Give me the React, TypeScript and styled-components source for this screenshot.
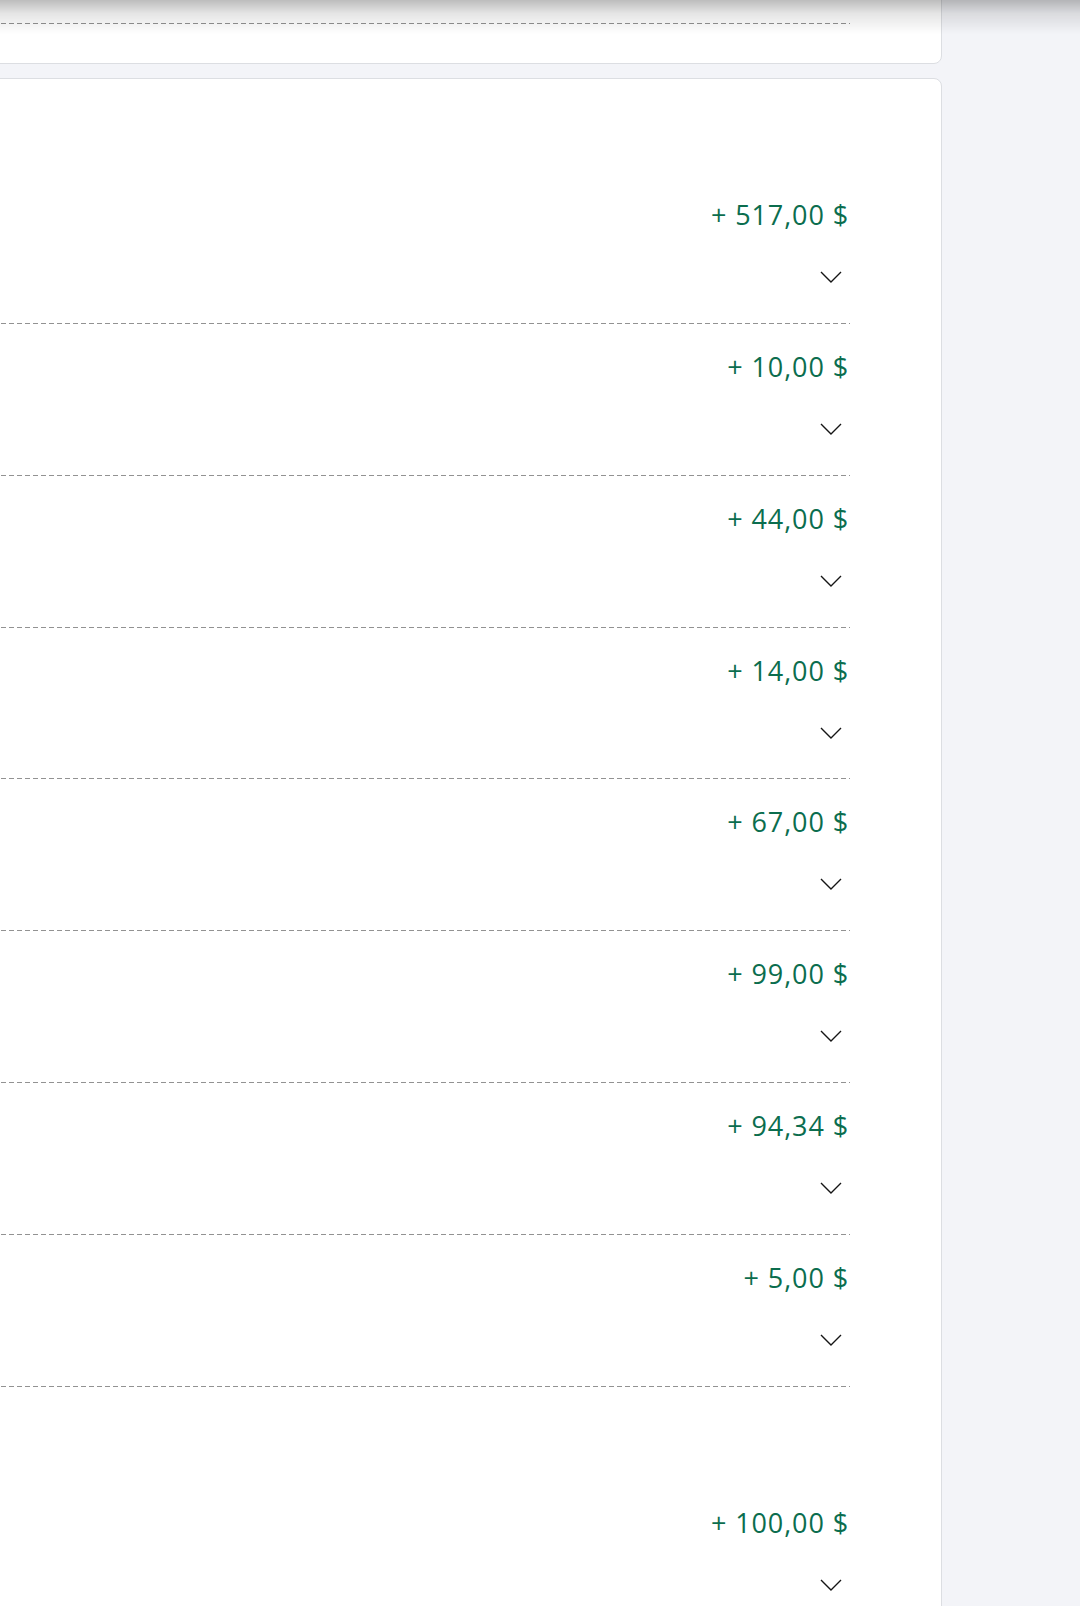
import styled, { createGlobalStyle } from 'styled-components';

type Entry = {
    id: string;
    amount: string;
};

type Group = {
    id: string;
    entries: Entry[];
};

const groups: Group[] = [
    {
        id: 'g1',
        entries: [
            { id: 'e1', amount: '+ 517,00 $' },
            { id: 'e2', amount: '+ 10,00 $' },
            { id: 'e3', amount: '+ 44,00 $' },
            { id: 'e4', amount: '+ 14,00 $' },
            { id: 'e5', amount: '+ 67,00 $' },
            { id: 'e6', amount: '+ 99,00 $' },
            { id: 'e7', amount: '+ 94,34 $' },
            { id: 'e8', amount: '+ 5,00 $' },
        ],
    },
    {
        id: 'g2',
        entries: [{ id: 'e9', amount: '+ 100,00 $' }],
    },
];

const GlobalStyle = createGlobalStyle`
    html, body {
        margin: 0;
        padding: 0;
        background: #f3f4f8;
        font-family: "Open Sans", "Noto Sans", sans-serif;
        overflow: hidden;
    }
`;

const TopShadow = styled.div`
    position: fixed;
    top: 0;
    left: 0;
    right: 0;
    height: 34px;
    pointer-events: none;
    background: linear-gradient(
        to bottom,
        rgba(0, 0, 0, 0.26) 0%,
        rgba(0, 0, 0, 0.1) 40%,
        rgba(0, 0, 0, 0) 100%
    );
`;

const Column = styled.main`
    display: flex;
    flex-direction: column;
    gap: 14px;
    width: 952px;
    margin-left: -10px;
    margin-top: -19px;
`;

const Card = styled.section`
    background: #ffffff;
    border: 1px solid #dcdee2;
    border-radius: 8px;
    padding: 0 91px 0 10px;
`;

const SummaryCard = styled(Card)`
    padding-top: 41px;
    padding-bottom: 39px;
`;

const Divider = styled.div`
    height: 1px;
    background-image: repeating-linear-gradient(
        to right,
        #929292 0 5px,
        transparent 5px 8px
    );
`;

const GroupHeader = styled.div`
    height: 93px;
`;

const Row = styled.div`
    box-sizing: border-box;
    height: 151.86px;
    display: flex;
    flex-direction: column;
    align-items: flex-end;
    padding-top: 25px;
`;

const Amount = styled.span`
    font-size: 27px;
    line-height: 35px;
    letter-spacing: 0.9px;
    margin-right: 1px;
    color: #0b6d4e;
`;

const Toggle = styled.button`
    display: flex;
    background: none;
    border: none;
    padding: 0;
    margin: 39px 8px 0 0;
    cursor: pointer;
`;

const RowBody = styled.div`
    flex: 1;
`;

const RowLine = styled(Divider)`
    align-self: stretch;
`;

const Chevron = () => (
    <svg width="22" height="12" viewBox="0 0 22 12" fill="none">
        <polyline points="1,1 11,11 21,1" stroke="#151515" strokeWidth="1.4" />
    </svg>
);

const EntryRow = ({ entry }: { entry: Entry }) => (
    <Row>
        <Amount>{entry.amount}</Amount>
        <Toggle aria-label="details">
            <Chevron />
        </Toggle>
        <RowBody />
        <RowLine />
    </Row>
);

const App = () => (
    <>
        <GlobalStyle />
        <Column>
            <SummaryCard>
                <Divider />
            </SummaryCard>
            <Card>
                {groups.map(group => (
                    <div key={group.id}>
                        <GroupHeader />
                        {group.entries.map(entry => (
                            <EntryRow key={entry.id} entry={entry} />
                        ))}
                    </div>
                ))}
            </Card>
        </Column>
        <TopShadow />
    </>
);

export default App;
